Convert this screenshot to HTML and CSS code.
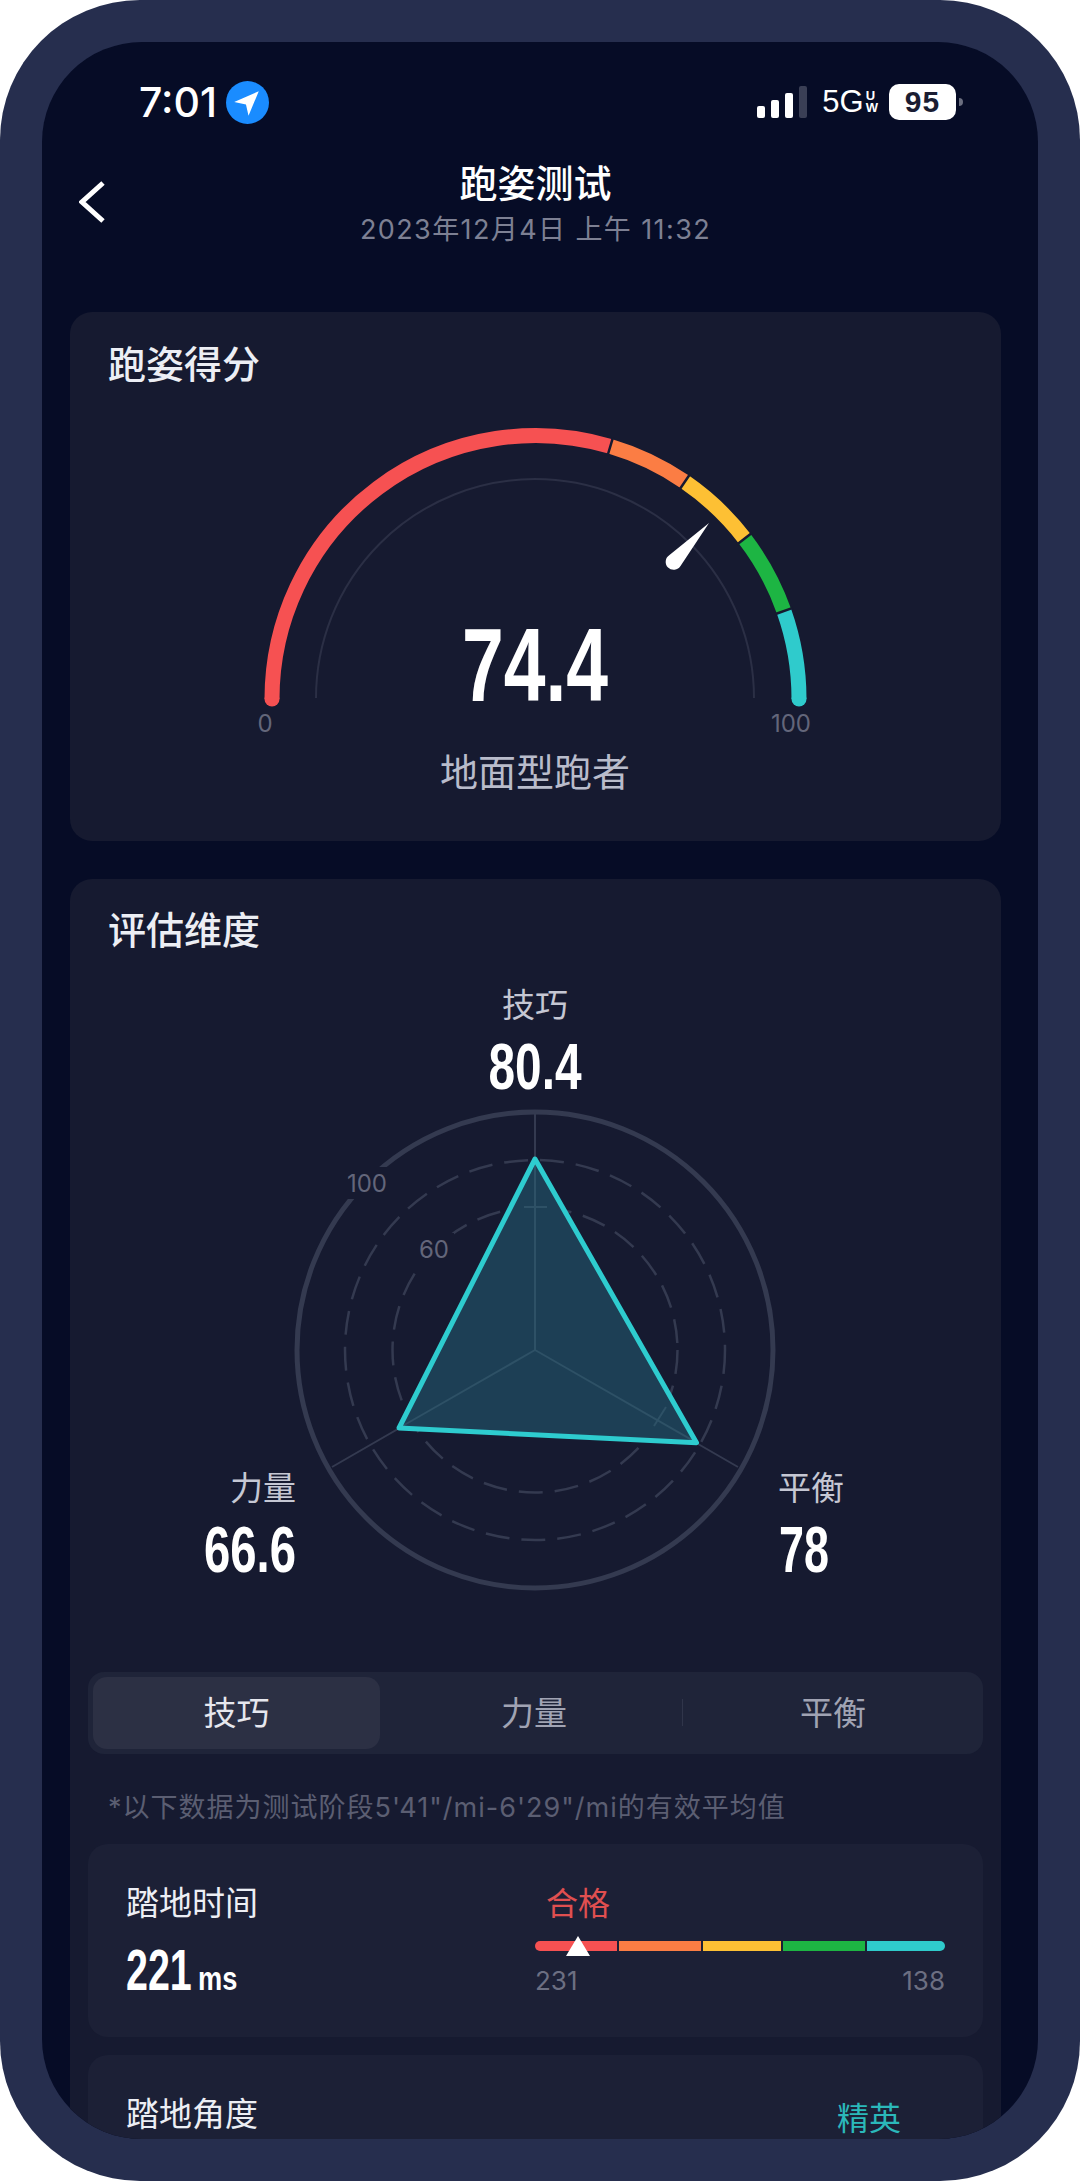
FILE: index.html
```html
<!DOCTYPE html>
<html lang="zh-CN">
<head>
    <meta charset="UTF-8">
    <meta name="viewport" content="width=device-width, initial-scale=1.0">
    <title>跑姿测试</title>
    <link rel="stylesheet" href="styles.css">
</head>
<body>
    <div class="phone">
        <div class="screen">
            <div class="status-bar">
                <div class="status-left">
                    <span class="clock">7:01</span>
                    <svg class="location" viewBox="0 0 42 42">
                        <circle cx="21" cy="21" r="21" fill="#1a8cff"/>
                        <path d="M32 10 L8 20.5 L19.5 23 L22 34 Z" fill="#fff"/>
                    </svg>
                </div>
                <div class="status-right">
                    <div class="signal">
                        <span class="sig sig-1"></span>
                        <span class="sig sig-2"></span>
                        <span class="sig sig-3"></span>
                        <span class="sig sig-4"></span>
                    </div>
                    <div class="network">
                        <span class="net-main">5G</span>
                        <span class="net-sub"><span>U</span><span>W</span></span>
                    </div>
                    <div class="battery">95</div>
                    <span class="battery-nub"></span>
                </div>
            </div>

            <div class="header">
                <svg class="back" viewBox="0 0 26 42">
                    <path d="M24 2 L3 21 L24 40" fill="none" stroke="#fff" stroke-width="5"/>
                </svg>
                <div class="header-text">
                    <div class="page-title">跑姿测试</div>
                    <div class="page-date">2023年12月4日 上午 11:32</div>
                </div>
            </div>

            <section class="card card-score">
                <h2 class="card-title">跑姿得分</h2>
                <svg class="gauge" viewBox="70 387 931 455">
                    <path class="thin-arc" d="M316 699 A219 219 0 0 1 754 699"/>
                    <circle cx="272" cy="700" r="7.5" fill="#f65152"/>
                    <circle cx="799" cy="700" r="7.5" fill="#2fcbcc"/>
                    <path class="arc" stroke="#f65152" d="M272 700 A263.5 263.5 0 0 1 610.3 447.4"/>
                    <path class="arc" stroke="#fb7d44" d="M610.3 447.4 A263.5 263.5 0 0 1 684.7 482.8"/>
                    <path class="arc" stroke="#fdc034" d="M684.7 482.8 A263.5 263.5 0 0 1 744.6 539.6"/>
                    <path class="arc" stroke="#1db543" d="M744.6 539.6 A263.5 263.5 0 0 1 783.9 612"/>
                    <path class="arc" stroke="#2fcbcc" d="M783.9 612 A263.5 263.5 0 0 1 799 700"/>
                    <path class="arc-gap" d="M607.6 456.5 L613 438.3 M679.4 490.7 L690.1 475 M737 545.4 L752.1 533.8 M774.9 615.2 L792.8 608.9"/>
                    <path d="M709 524 L680.5 567 A8 8 0 1 1 669.5 556 Z" fill="#fff"/>
                    <text class="gauge-num" x="535" y="702" text-anchor="middle" textLength="146" lengthAdjust="spacingAndGlyphs">74.4</text>
                    <text class="tick-label" x="265" y="733" text-anchor="middle">0</text>
                    <text class="tick-label" x="791" y="733" text-anchor="middle">100</text>
                    <text class="runner-type" x="535" y="787" text-anchor="middle">地面型跑者</text>
                </svg>
            </section>

            <section class="card card-dims">
                <h2 class="card-title">评估维度</h2>
                <svg class="radar" viewBox="70 953 931 720">
                    <circle class="ring-outer" cx="535" cy="1351" r="238"/>
                    <circle class="ring" cx="535" cy="1351" r="190"/>
                    <circle class="ring" cx="535" cy="1351" r="142.5"/>
                    <path class="axis" d="M535 1351 V1113 M535 1351 L738 1468 M535 1351 L332 1468"/>
                    <polygon class="shape-fill" points="535,1160 696.5,1443.7 399,1429"/>
                    <path class="axis-inner" d="M535 1351 V1160 M535 1351 L696.5 1443.7 M535 1351 L399 1429 M524 1208 H547 M654 1427 L666 1408"/>
                    <polygon class="shape-line" points="535,1160 696.5,1443.7 399,1429"/>
                    <rect class="label-back" x="344" y="1168" width="46" height="32"/>
                    <rect class="label-back" x="416" y="1234" width="38" height="32"/>
                    <text class="ring-label" x="367" y="1193" text-anchor="middle">100</text>
                    <text class="ring-label" x="434" y="1259" text-anchor="middle">60</text>
                    <text class="dim-name" x="535" y="1018" text-anchor="middle">技巧</text>
                    <text class="dim-num" x="535" y="1090" text-anchor="middle" textLength="93" lengthAdjust="spacingAndGlyphs">80.4</text>
                    <text class="dim-name" x="296" y="1501" text-anchor="end">力量</text>
                    <text class="dim-num" x="250" y="1573" text-anchor="middle" textLength="92" lengthAdjust="spacingAndGlyphs">66.6</text>
                    <text class="dim-name" x="811" y="1501" text-anchor="middle">平衡</text>
                    <text class="dim-num" x="804" y="1573" text-anchor="middle" textLength="50" lengthAdjust="spacingAndGlyphs">78</text>
                </svg>

                <div class="tabs">
                    <div class="tab active">技巧</div>
                    <div class="tab">力量</div>
                    <div class="tab tab-last">平衡</div>
                </div>

                <p class="note">*以下数据为测试阶段5'41"/mi-6'29"/mi的有效平均值</p>

                <div class="metric">
                    <div class="metric-left">
                        <div class="metric-name">踏地时间</div>
                        <div class="metric-value"><span class="value-num">221</span><span class="value-unit">ms</span></div>
                    </div>
                    <div class="metric-right">
                        <div class="level level-low">合格</div>
                        <div class="bar">
                            <span class="seg seg-red"></span>
                            <span class="seg seg-orange"></span>
                            <span class="seg seg-yellow"></span>
                            <span class="seg seg-green"></span>
                            <span class="seg seg-teal"></span>
                            <svg class="marker" viewBox="0 0 26 22"><path d="M13 1 L25 21 H1 Z" fill="#fff"/></svg>
                        </div>
                        <div class="bar-labels"><span>231</span><span>138</span></div>
                    </div>
                </div>

                <div class="metric">
                    <div class="metric-left">
                        <div class="metric-name">踏地角度</div>
                    </div>
                    <div class="metric-right metric-right-end">
                        <div class="level level-top">精英</div>
                    </div>
                </div>
            </section>
        </div>
    </div>
</body>
</html>
```

FILE: styles.css
```css
* {
    box-sizing: border-box;
}

html, body {
    margin: 0;
    background: #fff;
}

body {
    font-family: 'Inter', 'Noto Sans CJK SC', sans-serif;
    color: #fff;
}

.phone {
    width: 1080px;
    height: 2181px;
    padding: 42px;
    background: #262e4e;
    border-radius: 140px;
}

.screen {
    height: 2097px;
    padding: 0 37px 0 28px;
    background: #060c26;
    border-radius: 100px;
    overflow: hidden;
}

/* status bar */
.status-bar {
    height: 120px;
    display: flex;
    justify-content: space-between;
    align-items: center;
    padding: 0 38px 0 69px;
}

.status-left {
    display: flex;
    align-items: center;
    gap: 9px;
}

.clock {
    font-size: 41px;
    font-weight: 500;
}

.location {
    width: 43px;
    height: 43px;
}

.status-right {
    display: flex;
    align-items: center;
}

.signal {
    display: flex;
    align-items: flex-end;
    gap: 6px;
    height: 32px;
    margin-right: 15px;
}

.sig {
    width: 8px;
    background: #fff;
    border-radius: 2px;
}

.sig-1 { height: 12px; }
.sig-2 { height: 18px; }
.sig-3 { height: 25px; }
.sig-4 { height: 32px; background: #3a3f55; }

.network {
    display: flex;
    align-items: center;
    gap: 2px;
    margin-right: 11px;
}

.net-main {
    font-family: 'Liberation Sans', sans-serif;
    font-size: 31px;
}

.net-sub {
    display: flex;
    flex-direction: column;
    font-family: 'Liberation Sans', sans-serif;
    font-size: 13px;
    font-weight: 700;
    line-height: 12px;
}

.battery {
    width: 67px;
    height: 36px;
    background: #fff;
    border-radius: 10px;
    color: #1a1d33;
    font-family: 'Liberation Sans', sans-serif;
    font-size: 30px;
    font-weight: 700;
    line-height: 36px;
    text-align: center;
    letter-spacing: 1px;
}

.battery-nub {
    width: 4px;
    height: 8px;
    margin-left: 3px;
    background: #6b6f80;
    border-radius: 0 4px 4px 0;
}

/* header */
.header {
    display: grid;
    grid-template-columns: 1fr auto 1fr;
    align-items: center;
    margin-bottom: 60px;
}

.back {
    width: 26px;
    height: 42px;
    margin-left: 9px;
    margin-top: -10px;
}

.header-text {
    grid-column: 2;
    text-align: center;
}

.page-title {
    margin-top: -3px;
    font-family: 'Noto Sans CJK SC', sans-serif;
    font-size: 38px;
    font-weight: 500;
    line-height: 44px;
}

.page-date {
    margin-top: 5px;
    color: #7d8093;
    font-size: 27px;
    line-height: 44px;
    letter-spacing: 1.4px;
}

/* cards */
.card {
    background: #161a30;
    border-radius: 22px;
}

.card-score {
    height: 529px;
    padding-top: 28px;
    margin-bottom: 38px;
}

.card-dims {
    padding-top: 27px;
    padding-bottom: 60px;
}

.card-title {
    margin: 0 0 2px;
    padding-left: 38px;
    font-family: 'Noto Sans CJK SC', sans-serif;
    font-size: 38px;
    font-weight: 500;
    line-height: 44px;
    color: #eceef4;
}

.gauge, .radar {
    display: block;
    width: 931px;
}

.gauge { height: 455px; }
.radar { height: 720px; }

.arc {
    fill: none;
    stroke-width: 15;
}

.arc-gap {
    fill: none;
    stroke: #161a30;
    stroke-width: 2.5;
}

.thin-arc {
    fill: none;
    stroke: #2b2f45;
    stroke-width: 2;
}

.gauge-num, .dim-num {
    font-family: 'Liberation Sans', sans-serif;
    font-weight: 700;
    fill: #fff;
}

.gauge-num { font-size: 104px; }
.dim-num { font-size: 64px; }

.tick-label {
    font-size: 24px;
    fill: #63667a;
}

.runner-type {
    font-family: 'Noto Sans CJK SC', sans-serif;
    font-size: 38px;
    fill: #b9bccb;
}

.ring-outer {
    fill: none;
    stroke: #343a50;
    stroke-width: 5;
}

.ring {
    fill: none;
    stroke: #343a50;
    stroke-width: 2.5;
    stroke-dasharray: 24 12;
}

.axis {
    fill: none;
    stroke: #343a50;
    stroke-width: 2;
}

.axis-inner {
    fill: none;
    stroke: #2e5166;
    stroke-width: 2;
}

.shape-fill {
    fill: #1d3f55;
}

.shape-line {
    fill: none;
    stroke: #2ecccf;
    stroke-width: 5;
    stroke-linejoin: round;
}

.label-back {
    fill: #161a30;
}

.ring-label {
    font-size: 24px;
    fill: #63667a;
}

.dim-name {
    font-family: 'Noto Sans CJK SC', sans-serif;
    font-size: 33px;
    fill: #c5c7d3;
}

/* tabs */
.tabs {
    display: grid;
    grid-template-columns: 287px 302px 1fr;
    height: 82px;
    margin: 0 18px;
    padding: 5px;
    background: #1f2439;
    border-radius: 16px;
}

.tab {
    display: flex;
    align-items: center;
    justify-content: center;
    font-family: 'Noto Sans CJK SC', sans-serif;
    font-size: 33px;
    color: #a0a3b3;
    padding: 0 0 4px 6px;
}

.tab.active {
    padding-left: 0;
    background: #2c3044;
    border-radius: 14px;
    color: #e6e7ee;
}

.tab-last {
    position: relative;
}

.tab-last::before {
    content: "";
    position: absolute;
    left: 0;
    top: 22px;
    height: 27px;
    width: 1px;
    background: #30354a;
}

.note {
    margin: 0;
    padding: 0 0 0 38px;
    height: 90px;
    font-size: 27px;
    line-height: 108px;
    color: #5b5e72;
    white-space: nowrap;
    letter-spacing: 1px;
}

/* metrics */
.metric {
    display: flex;
    justify-content: space-between;
    height: 193px;
    margin: 0 18px 18px;
    padding: 34px 38px 0 38px;
    background: #1c2036;
    border-radius: 20px;
}

.metric-name {
    font-family: 'Noto Sans CJK SC', sans-serif;
    font-size: 33px;
    line-height: 46px;
    color: #eceef4;
}

.metric-value {
    margin-top: 12px;
    display: flex;
    align-items: baseline;
    height: 62px;
}

.value-num {
    font-family: 'Liberation Sans', sans-serif;
    font-size: 58px;
    font-weight: 700;
    transform: scaleX(.68);
    transform-origin: left;
    width: 72px;
}

.value-unit {
    font-family: 'Liberation Sans', sans-serif;
    font-size: 34px;
    font-weight: 700;
    transform: scaleX(.8);
    transform-origin: left;
}

.metric-right {
    width: 410px;
}

.metric-right-end {
    display: flex;
    justify-content: flex-end;
    padding-right: 44px;
}

.level {
    font-family: 'Noto Sans CJK SC', sans-serif;
    font-size: 32px;
    line-height: 46px;
}

.level-low {
    padding-left: 11px;
    color: #e04f50;
}

.level-top {
    color: #2bb8ba;
    padding-top: 4px;
}

.bar {
    position: relative;
    display: flex;
    gap: 2px;
    height: 10px;
    margin-top: 17px;
}

.seg { flex: 82; }
.seg-red { background: #f65152; border-radius: 5px 0 0 5px; }
.seg-orange { background: #fb7d44; }
.seg-yellow { background: #fdc034; flex: 78; }
.seg-green { background: #1db543; }
.seg-teal { background: #2fcbcc; flex: 78; border-radius: 0 5px 5px 0; }

.marker {
    position: absolute;
    left: 30px;
    top: -6px;
    width: 26px;
    height: 22px;
}

.bar-labels {
    display: flex;
    justify-content: space-between;
    margin-top: 14px;
    font-size: 26px;
    line-height: 32px;
    color: #6c6f82;
}
```
